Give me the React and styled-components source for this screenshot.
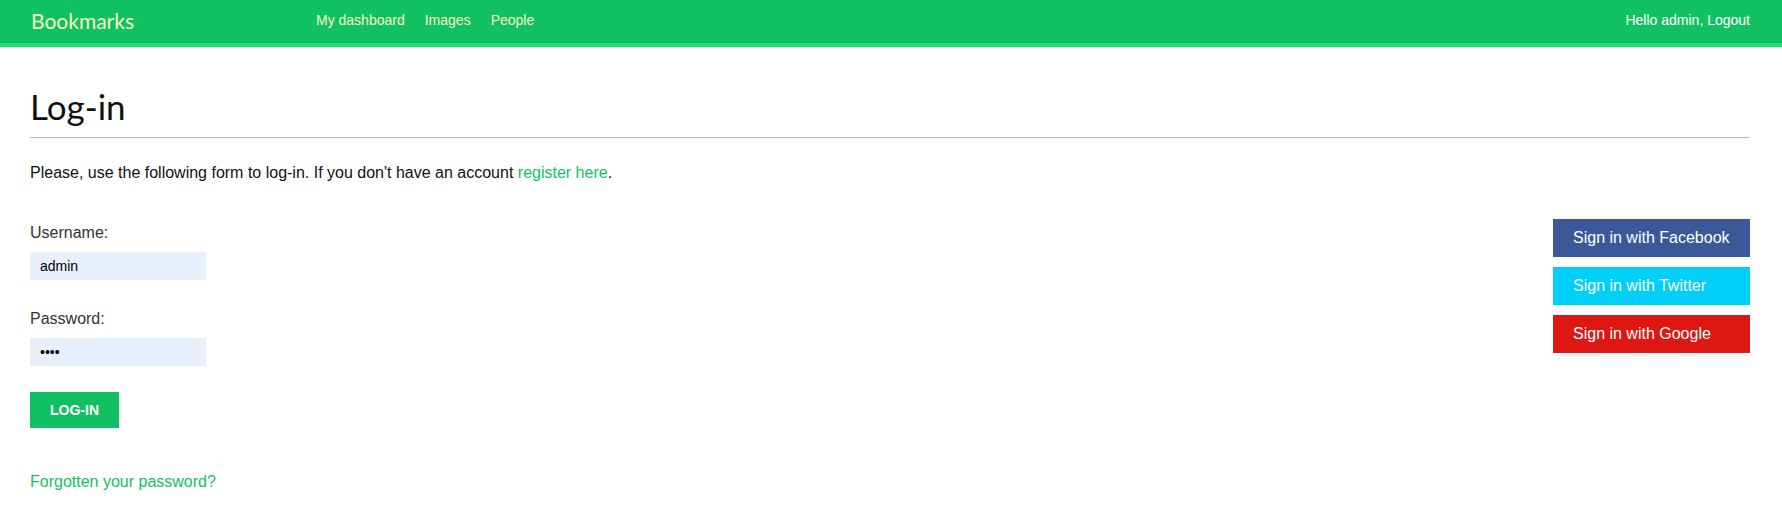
import React from "react";
import styled, { createGlobalStyle } from "styled-components";

const GlobalStyle = createGlobalStyle`
  html, body { margin: 0; padding: 0; background: #fff; }
  body {
    font-family: "Liberation Sans", Arial, Helvetica, sans-serif;
    font-size: 16px;
    color: #333;
  }
  * { box-sizing: border-box; }
`;

const Header = styled.header`
  display: flex;
  align-items: center;
  height: 47px;
  padding: 0 32px 3px 31px;
  background: #12c064;
  border-bottom: 4px solid #1ce27a;
  font-size: 14px;
`;

const Logo = styled.span`
  width: 285px;
  font-family: Lato, "Noto Sans", sans-serif;
  font-size: 21px;
  line-height: 1;
  color: #f4f7bd;
`;

const Nav = styled.nav`
  display: flex;
  gap: 20px;
  flex: 1;
`;

const NavLink = styled.a`
  color: #f4f7bd;
  text-decoration: none;
  line-height: 1;
`;

const UserInfo = styled.span`
  color: #fff;
  line-height: 1;
`;

const Content = styled.main`
  padding: 0 32px 0 30px;
`;

const Title = styled.h1`
  margin: 39px 0 0;
  padding-bottom: 11px;
  border-bottom: 1px solid #bbb;
  font-family: Lato, "Noto Sans", sans-serif;
  font-weight: 400;
  font-size: 35px;
  line-height: 40px;
  color: #111;
`;

const Intro = styled.p`
  margin: 25px 0 0;
  line-height: 20px;
  color: #111;
`;

const Link = styled.a`
  color: #12c064;
  text-decoration: none;
`;

const Row = styled.div`
  display: flex;
  justify-content: space-between;
  align-items: flex-start;
  margin-top: 36px;
`;

const Form = styled.form`
  display: flex;
  flex-direction: column;
  align-items: flex-start;
  padding-top: 4px;
`;

const Label = styled.label`
  display: block;
  line-height: 20px;
  color: #333;
  margin-top: ${(p) => p.$mt || 0}px;
`;

const Input = styled.input`
  display: block;
  width: 176px;
  height: 28px;
  margin-top: 9px;
  padding: 0 10px;
  border: none;
  outline: none;
  background: #e8f0fe;
  font-family: "Liberation Sans", Arial, sans-serif;
  font-size: 14px;
  color: #000;
`;

const Submit = styled.button`
  margin-top: 26px;
  height: 36px;
  padding: 0 20px;
  border: none;
  background: #12c064;
  color: #fff;
  font-family: "Liberation Sans", Arial, sans-serif;
  font-weight: 700;
  font-size: 14px;
  line-height: 36px;
  text-transform: uppercase;
  cursor: pointer;
`;

const Forgot = styled.p`
  margin: 44px 0 0;
  line-height: 20px;
`;

const Social = styled.ul`
  list-style: none;
  margin: 0;
  padding: 0;
  display: flex;
  flex-direction: column;
  gap: 10px;
  width: 197px;
`;

const SocialButton = styled.a`
  display: block;
  height: 38px;
  line-height: 38px;
  padding: 0 20px;
  background: ${(p) => p.$bg};
  color: #fff;
  text-decoration: none;
  font-size: 16px;
`;

const socials = [
  { label: "Sign in with Facebook", bg: "#3b5998" },
  { label: "Sign in with Twitter", bg: "#00cffa" },
  { label: "Sign in with Google", bg: "#dd1812" },
];

export default function App() {
  return (
    <>
      <GlobalStyle />
      <Header>
        <Logo>Bookmarks</Logo>
        <Nav>
          <NavLink href="#">My dashboard</NavLink>
          <NavLink href="#">Images</NavLink>
          <NavLink href="#">People</NavLink>
        </Nav>
        <UserInfo>Hello admin, Logout</UserInfo>
      </Header>
      <Content>
        <Title>Log-in</Title>
        <Intro>
          Please, use the following form to log-in. If you don't have an account{" "}
          <Link href="#">register here</Link>.
        </Intro>
        <Row>
          <div>
            <Form onSubmit={(e) => e.preventDefault()}>
              <Label htmlFor="u">Username:</Label>
              <Input id="u" type="text" defaultValue="admin" readOnly />
              <Label htmlFor="p" $mt={29}>Password:</Label>
              <Input id="p" type="password" defaultValue="1234" readOnly />
              <Submit type="submit">Log-in</Submit>
            </Form>
            <Forgot>
              <Link href="#">Forgotten your password?</Link>
            </Forgot>
          </div>
          <Social>
            {socials.map((s) => (
              <li key={s.label}>
                <SocialButton href="#" $bg={s.bg}>{s.label}</SocialButton>
              </li>
            ))}
          </Social>
        </Row>
      </Content>
    </>
  );
}
